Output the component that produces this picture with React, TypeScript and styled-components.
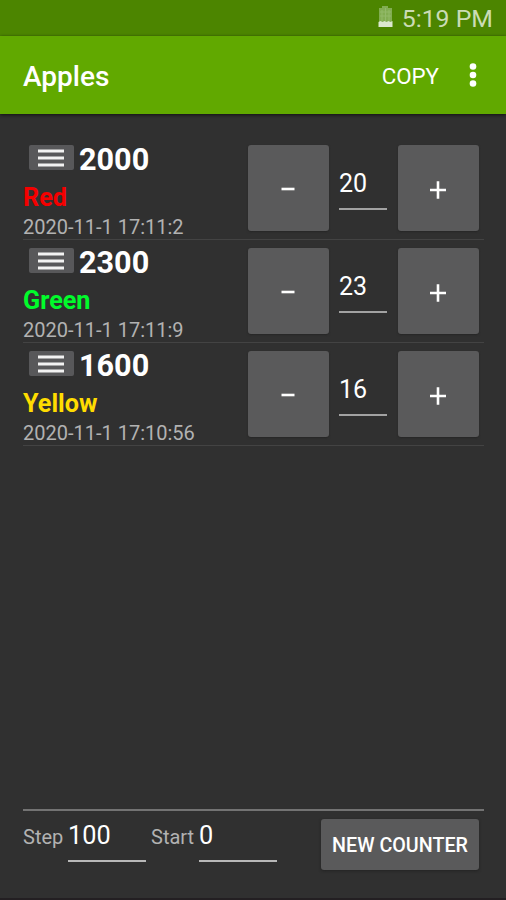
import React from 'react';
import styled, { createGlobalStyle } from 'styled-components';

const GlobalStyle = createGlobalStyle`
  *, *::before, *::after { box-sizing: border-box; }
  body { margin: 0; background: #303030; }
  button, input { font-family: inherit; border: 0; padding: 0; margin: 0; }
`;

const Screen = styled.div`
  display: flex;
  flex-direction: column;
  width: 506px;
  height: 900px;
  overflow: hidden;
  background: #303030;
  border-bottom: 2px solid #231f22;
  color: #fff;
  font-family: Roboto, sans-serif;
`;

const StatusBar = styled.div`
  display: flex;
  align-items: flex-start;
  justify-content: flex-end;
  height: 36px;
  flex: none;
  padding: 0 13px 0 0;
  gap: 9px;
  background: #4c8500;
  color: #cbdcb5;
  font-size: 24.8px;
  line-height: 38px;

  svg { margin-top: 5px; }
`;

const AppBar = styled.header`
  display: flex;
  align-items: center;
  height: 78px;
  flex: none;
  padding: 0 29px 0 23px;
  background: #61a900;
  box-shadow: 0 1px 3px #111;
`;

const Title = styled.h1`
  flex: 1;
  margin: 0;
  padding-top: 3px;
  font-size: 28px;
  font-weight: 500;
  line-height: 32px;
`;

const CopyButton = styled.button`
  margin-right: 30px;
  padding-top: 2px;
  background: none;
  color: #fff;
  font-size: 22.3px;
  line-height: 28px;
`;

const CounterList = styled.main`
  flex: 1;
  padding: 23px 22px 0 23px;
`;

const CounterRow = styled.section`
  display: flex;
  height: 103px;
  border-bottom: 1px solid #434343;
`;

const CounterInfo = styled.div`
  width: 225px;
`;

const CountLine = styled.div`
  display: flex;
  align-items: center;
  height: 42px;
  padding-left: 5.5px;
  gap: 5.5px;
`;

const DragHandle = styled.button`
  display: flex;
  align-items: center;
  justify-content: center;
  width: 45px;
  height: 25px;
  margin-top: -1px;
  border-radius: 2px;
  background: #58585a;
`;

const Count = styled.span`
  font-size: 30.6px;
  font-weight: 700;
  line-height: 42px;
  padding-top: 3px;
`;

const CounterName = styled.div<{ $color: string }>`
  height: 36px;
  color: ${({ $color }) => $color};
  font-size: 25.2px;
  font-weight: 700;
  line-height: 37px;
`;

const Timestamp = styled.div`
  color: #b2b2b2;
  font-size: 20px;
  line-height: 24px;
`;

const StepButton = styled.button`
  display: flex;
  align-items: center;
  justify-content: center;
  width: 80.5px;
  height: 86px;
  margin-top: 8px;
  padding-top: 2px;
  border-radius: 3px;
  background: #5a5a5b;
  box-shadow: 0 1px 2px #262626;
`;

const AmountInput = styled.input`
  width: 48px;
  height: 46px;
  margin: 27px 11px 0 10.5px;
  padding: 0 0 5px 0;
  background: none;
  border-bottom: 2px solid #a2a2a2;
  border-radius: 0;
  color: #fff;
  font-size: 25px;
  outline: none;
`;

const Footer = styled.footer`
  display: flex;
  height: 89px;
  flex: none;
  margin: 0 22px 0 23px;
  border-top: 2px solid #737373;
`;

const FieldLabel = styled.label<{ $width: number }>`
  width: ${({ $width }) => $width}px;
  padding-top: 13px;
  color: #b2b2b2;
  font-size: 20px;
  line-height: 26px;
`;

const FieldInput = styled.input`
  width: 78px;
  height: 46px;
  margin: 5px 5px 0 0;
  padding: 0 0 5px 0;
  background: none;
  border-bottom: 2px solid #b8b8b8;
  border-radius: 0;
  color: #fff;
  font-size: 25.3px;
  outline: none;
`;

const NewCounterButton = styled.button`
  width: 158px;
  height: 51px;
  margin: 8px 5px 0 auto;
  padding-top: 1px;
  border-radius: 3px;
  background: #5a5a5b;
  box-shadow: 0 1px 3px #222;
  color: #fff;
  font-size: 19.7px;
  font-weight: 500;
  white-space: nowrap;
`;

const BatteryIcon = () => (
  <svg width="15" height="23" viewBox="0 0 15 23">
    <path d="M4 1h6v2h4v14H1V3h3z" fill="#82ad52" />
    <path d="M4 5v11M7.5 3v13M11 5v11M2 7h11M2 11h11" stroke="#92b969" strokeWidth="1" />
    <path d="M0.5 17l2-1 2 1 2-1 2 1 2-1 2 1 2-1v6h-14z" fill="#dce8cf" />
  </svg>
);

const OverflowIcon = () => (
  <svg width="8" height="26" viewBox="0 0 8 26" fill="#fff">
    <circle cx="4" cy="4.5" r="3.3" />
    <circle cx="4" cy="13" r="3.3" />
    <circle cx="4" cy="21.5" r="3.3" />
  </svg>
);

const HandleIcon = () => (
  <svg width="26" height="18" viewBox="0 0 26 18">
    <path d="M0 2h26M0 9h26M0 16h26" stroke="#f2f2f2" strokeWidth="2.8" />
  </svg>
);

const MinusIcon = () => (
  <svg width="16" height="16" viewBox="0 0 16 16">
    <path d="M1.5 8h13" stroke="#fff" strokeWidth="2.6" />
  </svg>
);

const PlusIcon = () => (
  <svg width="18" height="20" viewBox="0 0 18 20">
    <path d="M1 11h16M9 2.3v17.4" stroke="#fff" strokeWidth="2.6" />
  </svg>
);

const counters = [
  { name: 'Red', color: '#f50000', count: 2000, time: '2020-11-1 17:11:2', amount: 20 },
  { name: 'Green', color: '#00fb2b', count: 2300, time: '2020-11-1 17:11:9', amount: 23 },
  { name: 'Yellow', color: '#ffdc00', count: 1600, time: '2020-11-1 17:10:56', amount: 16 },
];

export default function App() {
  return (
    <>
      <GlobalStyle />
      <Screen>
        <StatusBar>
          <BatteryIcon />
          <span>5:19 PM</span>
        </StatusBar>
        <AppBar>
          <Title>Apples</Title>
          <CopyButton>COPY</CopyButton>
          <OverflowIcon />
        </AppBar>
        <CounterList>
          {counters.map((c) => (
            <CounterRow key={c.name}>
              <CounterInfo>
                <CountLine>
                  <DragHandle aria-label="Reorder"><HandleIcon /></DragHandle>
                  <Count>{c.count}</Count>
                </CountLine>
                <CounterName $color={c.color}>{c.name}</CounterName>
                <Timestamp>{c.time}</Timestamp>
              </CounterInfo>
              <StepButton aria-label="Decrease"><MinusIcon /></StepButton>
              <AmountInput defaultValue={c.amount} />
              <StepButton aria-label="Increase"><PlusIcon /></StepButton>
            </CounterRow>
          ))}
        </CounterList>
        <Footer>
          <FieldLabel $width={45} htmlFor="step">Step</FieldLabel>
          <FieldInput id="step" defaultValue="100" />
          <FieldLabel $width={48} htmlFor="start">Start</FieldLabel>
          <FieldInput id="start" defaultValue="0" />
          <NewCounterButton>NEW COUNTER</NewCounterButton>
        </Footer>
      </Screen>
    </>
  );
}
